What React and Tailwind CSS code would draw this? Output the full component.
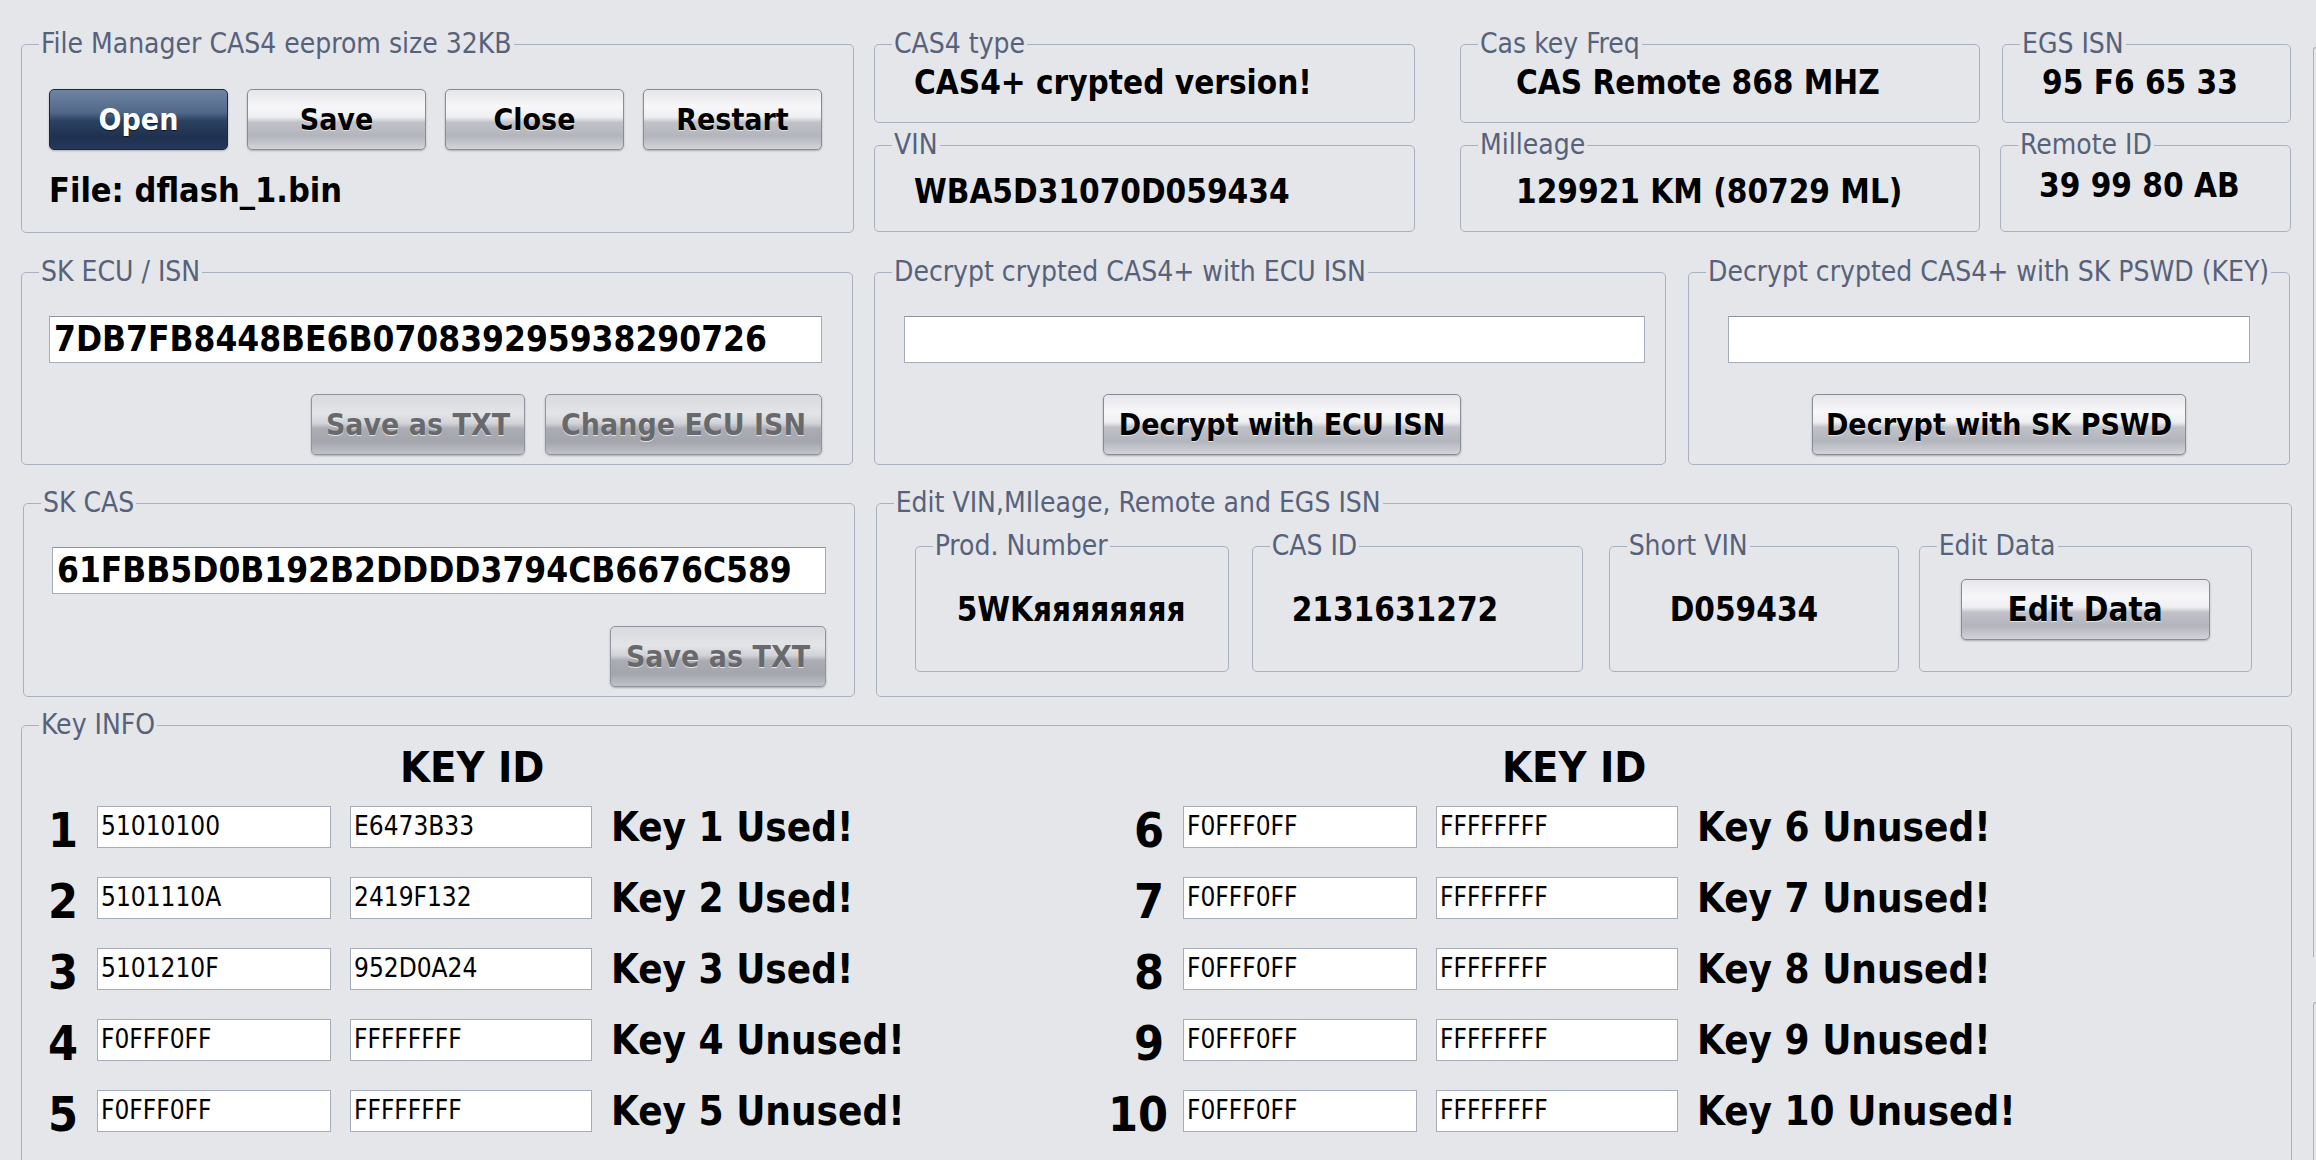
import React from "react";

/**
 * CAS4 eeprom editor — file manager, ISN / SK fields, and key info table.
 */

const keysLeft = [
  { n: "1", a: "51010100", b: "E6473B33", label: "Key 1 Used!" },
  { n: "2", a: "5101110A", b: "2419F132", label: "Key 2 Used!" },
  { n: "3", a: "5101210F", b: "952D0A24", label: "Key 3 Used!" },
  { n: "4", a: "F0FFF0FF", b: "FFFFFFFF", label: "Key 4 Unused!" },
  { n: "5", a: "F0FFF0FF", b: "FFFFFFFF", label: "Key 5 Unused!" },
];

const keysRight = [
  { n: "6", a: "F0FFF0FF", b: "FFFFFFFF", label: "Key 6 Unused!" },
  { n: "7", a: "F0FFF0FF", b: "FFFFFFFF", label: "Key 7 Unused!" },
  { n: "8", a: "F0FFF0FF", b: "FFFFFFFF", label: "Key 8 Unused!" },
  { n: "9", a: "F0FFF0FF", b: "FFFFFFFF", label: "Key 9 Unused!" },
  { n: "10", a: "F0FFF0FF", b: "FFFFFFFF", label: "Key 10 Unused!" },
];

function Group({ title, className = "", children }) {
  return (
    <fieldset className={`min-w-0 rounded-[5px] border border-[#a9b1c1] ${className}`}>
      <legend className="ml-[17px] px-[2px] text-[28px] leading-[30px] text-[#57627a]">{title}</legend>
      {children}
    </fieldset>
  );
}

function Btn({ children, className = "", disabled, primary }) {
  let skin =
    "border-[#868c98] bg-[linear-gradient(180deg,#e6e6ea_0%,#f7f7f9_28%,#efeff2_46%,#c0c1c9_55%,#b3b5bd_78%,#d3d4d9_100%)] text-black [text-shadow:0_1px_0_rgba(255,255,255,0.6)]";
  if (disabled)
    skin =
      "border-[#8e94a0] bg-[linear-gradient(180deg,#d9dade_0%,#e3e4e7_32%,#d2d3d8_48%,#abacb4_57%,#a3a5ad_80%,#c2c3c9_100%)] text-[#68696c] [text-shadow:0_1px_0_rgba(255,255,255,0.7)]";
  if (primary)
    skin =
      "border-[#1c283f] bg-[linear-gradient(180deg,#6f84a2_0%,#51688a_38%,#2c4262_52%,#1f3050_80%,#26385a_100%)] text-white [text-shadow:0_1px_1px_rgba(0,0,0,0.6)]";
  return (
    <div
      className={`flex h-[61px] items-center justify-center rounded-[5px] border text-[30px] font-bold shadow-[0_1px_2px_rgba(0,0,0,0.25)] ${skin} ${className}`}
    >
      {children}
    </div>
  );
}

function Value({ children, className = "" }) {
  return <div className={`text-[33px] font-bold leading-[36px] text-black ${className}`}>{children}</div>;
}

function Field({ children, className = "" }) {
  return (
    <div
      className={`flex h-[47px] items-center border border-[#a5acba] border-t-[#8d94a3] bg-white px-[4px] text-[35px] font-bold text-black ${className}`}
    >
      {children}
    </div>
  );
}

function KeyRow({ n, a, b, label }) {
  return (
    <div className="flex h-[71px] items-center">
      <div className="w-[56px] pt-[6px] text-right text-[48px] font-bold leading-none text-black">{n}</div>
      <div className="ml-[19px] flex h-[42px] w-[234px] items-center border border-[#a5acba] bg-white px-[3px] text-[26px] text-black">
        {a}
      </div>
      <div className="ml-[19px] flex h-[42px] w-[242px] items-center border border-[#a5acba] bg-white px-[3px] text-[26px] text-black">
        {b}
      </div>
      <div className="ml-[19px] text-[40px] font-bold leading-none text-black">{label}</div>
    </div>
  );
}

function KeyColumn({ rows, headPad }) {
  return (
    <div className="w-[1086px]">
      <div className={`mt-[5px] h-[44px] text-[43px] font-bold leading-[44px] text-black ${headPad}`}>KEY ID</div>
      <div className="mt-[2px]">
        {rows.map((r) => (
          <KeyRow key={r.n} {...r} />
        ))}
      </div>
    </div>
  );
}

export default function App() {
  return (
    <div className="flex h-[1160px] w-[2316px] overflow-hidden bg-[#e4e6ea] pl-[21px] pt-[29px] font-['DejaVu_Sans_Condensed','DejaVu_Sans',sans-serif] [font-stretch:condensed]">
      <div className="w-[2271px] shrink-0">
        {/* row 1 */}
        <div className="flex">
          <Group title="File Manager CAS4 eeprom size 32KB" className="h-[204px] w-[833px]">
            <div className="ml-[27px] mt-[30px] flex gap-[19px]">
              <Btn primary className="w-[179px]">Open</Btn>
              <Btn className="w-[179px]">Save</Btn>
              <Btn className="w-[179px]">Close</Btn>
              <Btn className="w-[179px]">Restart</Btn>
            </div>
            <div className="ml-[27px] mt-[22px] text-[34px] font-bold leading-[36px] text-black">File: dflash_1.bin</div>
          </Group>

          <div className="ml-[20px] flex flex-col gap-[7px]">
            <div className="flex">
              <Group title="CAS4 type" className="h-[94px] w-[541px]">
                <Value className="ml-[39px] mt-[6px]">CAS4+ crypted version!</Value>
              </Group>
              <Group title="Cas key Freq" className="ml-[45px] h-[94px] w-[520px]">
                <Value className="ml-[55px] mt-[6px]">CAS Remote 868 MHZ</Value>
              </Group>
              <Group title="EGS ISN" className="ml-[22px] h-[94px] w-[289px]">
                <Value className="ml-[39px] mt-[6px]">95 F6 65 33</Value>
              </Group>
            </div>
            <div className="flex">
              <Group title="VIN" className="h-[102px] w-[541px]">
                <Value className="ml-[39px] mt-[14px]">WBA5D31070D059434</Value>
              </Group>
              <Group title="Milleage" className="ml-[45px] h-[102px] w-[520px]">
                <Value className="ml-[55px] mt-[14px]">129921 KM (80729 ML)</Value>
              </Group>
              <Group title="Remote ID" className="ml-[20px] h-[102px] w-[291px]">
                <Value className="ml-[38px] mt-[8px]">39 99 80 AB</Value>
              </Group>
            </div>
          </div>
        </div>

        {/* row 2 */}
        <div className="mt-[24px] flex">
          <Group title="SK ECU / ISN" className="h-[208px] w-[832px]">
            <Field className="ml-[27px] mt-[29px] w-[773px]">7DB7FB8448BE6B070839295938290726</Field>
            <div className="ml-[289px] mt-[31px] flex gap-[20px]">
              <Btn disabled className="w-[214px]">Save as TXT</Btn>
              <Btn disabled className="w-[277px]">Change ECU ISN</Btn>
            </div>
          </Group>
          <Group title="Decrypt crypted CAS4+ with ECU ISN" className="ml-[21px] h-[208px] w-[792px]">
            <Field className="ml-[29px] mt-[29px] w-[741px]" />
            <Btn className="ml-[228px] mt-[31px] w-[358px]">Decrypt with ECU ISN</Btn>
          </Group>
          <Group title="Decrypt crypted CAS4+ with SK PSWD (KEY)" className="ml-[22px] h-[208px] w-[602px]">
            <Field className="ml-[39px] mt-[29px] w-[522px]" />
            <Btn className="ml-[123px] mt-[31px] w-[374px]">Decrypt with SK PSWD</Btn>
          </Group>
        </div>

        {/* row 3 */}
        <div className="mt-[23px] flex">
          <Group title="SK CAS" className="ml-[2px] h-[209px] w-[832px]">
            <Field className="ml-[28px] mt-[29px] w-[774px]">61FBB5D0B192B2DDDD3794CB6676C589</Field>
            <Btn disabled className="ml-[586px] mt-[32px] w-[216px]">Save as TXT</Btn>
          </Group>
          <Group title="Edit VIN,MIleage, Remote and EGS ISN" className="ml-[21px] h-[209px] w-[1417px]">
            <div className="ml-[38px] mt-[13px] flex">
              <Group title="Prod. Number" className="h-[141px] w-[314px]">
                <Value className="ml-[41px] mt-[31px]">5WKяяяяяяяя</Value>
              </Group>
              <Group title="CAS ID" className="ml-[23px] h-[141px] w-[331px]">
                <Value className="ml-[39px] mt-[31px]">2131631272</Value>
              </Group>
              <Group title="Short VIN" className="ml-[26px] h-[141px] w-[290px]">
                <Value className="ml-[60px] mt-[31px]">D059434</Value>
              </Group>
              <Group title="Edit Data" className="ml-[20px] h-[141px] w-[333px]">
                <Btn className="ml-[41px] mt-[18px] w-[249px] text-[33px]">Edit Data</Btn>
              </Group>
            </div>
          </Group>
        </div>

        {/* row 4 */}
        <Group title="Key INFO" className="mt-[13px] h-[480px] w-[2271px]">
          <div className="flex">
            <KeyColumn rows={keysLeft} headPad="pl-[378px]" />
            <KeyColumn rows={keysRight} headPad="pl-[394px]" />
          </div>
        </Group>
      </div>

      {/* partially visible panels on the right edge */}
      <div className="ml-[21px] flex-1">
        <div className="mt-[18px] h-[910px] rounded-tl-[5px] border-l border-t border-[#a9b1c1]" />
        <div className="mt-[45px] h-[200px] rounded-tl-[5px] border-l border-t border-[#a9b1c1]" />
      </div>
    </div>
  );
}
